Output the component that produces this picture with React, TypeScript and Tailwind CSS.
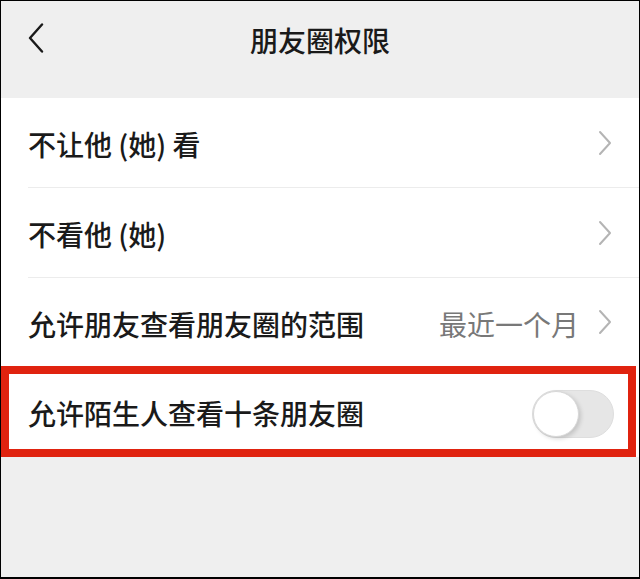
import React from "react";

const font = {
  fontFamily: '"Noto Sans CJK SC", "Noto Sans", "Liberation Sans", sans-serif',
};

const Chevron = () => (
  <svg width="14" height="26" viewBox="0 0 14 26" fill="none" className="shrink-0">
    <path d="M2 2 L12 13 L2 24" stroke="#b4b4b4" strokeWidth="2" strokeLinecap="round" strokeLinejoin="round" />
  </svg>
);

const BackIcon = () => (
  <svg width="16" height="30" viewBox="0 0 16 30" fill="none">
    <path d="M14 1.5 L2 15 L14 28.5" stroke="#1a1a1a" strokeWidth="2.4" strokeLinecap="round" strokeLinejoin="round" />
  </svg>
);

const Toggle = () => (
  <div className="relative w-[82px] h-[48px] mt-[5px] rounded-full bg-[#e6e6e6] border border-[#dedede]">
    <div className="absolute left-0 top-0 w-[46px] h-[46px] rounded-full bg-white border border-[#d8d8d8] shadow-[2px_2px_4px_rgba(0,0,0,0.15)]" />
  </div>
);

const rows = [
  { label: "不让他 (她) 看", h: "h-[90px]" },
  { label: "不看他 (她)", h: "h-[90px]" },
  { label: "允许朋友查看朋友圈的范围", value: "最近一个月", h: "h-[88px]", last: true },
];

export default function App() {
  return (
    <div
      className="w-[640px] h-[579px] box-border bg-[#efefef] border border-b-2 border-black flex flex-col overflow-hidden"
      style={font}
    >
      {/* Header */}
      <div className="h-[97px] shrink-0">
        <div className="h-[78px] grid grid-cols-[1fr_auto_1fr] items-center px-[27px]">
          <div className="flex items-center mb-[4px]">
            <BackIcon />
          </div>
          <h1 className="text-[28px] font-medium text-[#1a1a1a] leading-none">朋友圈权限</h1>
          <div />
        </div>
      </div>

      {/* List */}
      <div className="bg-white">
        {rows.map((row) => (
          <div key={row.label} className="pl-[27px]">
            <div
              className={`${row.h} flex items-center pr-[27px] ${row.last ? "" : "border-b border-[#ececec]"}`}
            >
              <span className="flex-1 text-[28px] font-medium text-[#1a1a1a] leading-none pt-[3px]">
                {row.label}
              </span>
              {row.value && (
                <span className="text-[28px] text-[#787878] leading-none pt-[3px] mr-[19px]">{row.value}</span>
              )}
              <Chevron />
            </div>
          </div>
        ))}

        {/* Highlighted row */}
        <div className="h-[91px] pr-[3px]">
          <div className="h-full border-[8px] border-[#e0230f] flex items-center pl-[19px] pr-[14px]">
            <span className="flex-1 text-[28px] font-medium text-[#1a1a1a] leading-none pt-[3px]">
              允许陌生人查看十条朋友圈
            </span>
            <Toggle />
          </div>
        </div>
      </div>
    </div>
  );
}
